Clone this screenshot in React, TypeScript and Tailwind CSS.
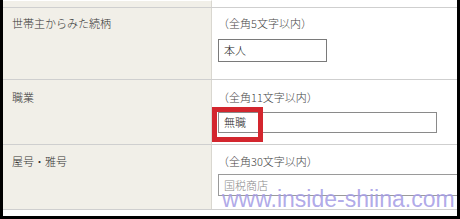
const jp = "font-['Noto_Sans_CJK_JP','Noto_Sans',sans-serif]";

function Row({
  label,
  hint,
  children,
  h,
  pt,
  gap,
}: {
  label: string;
  hint: string;
  children: React.ReactNode;
  h: string;
  pt: string;
  gap: string;
}) {
  return (
    <div className={`grid grid-cols-[209px_1fr] border-b border-[#cfcfcf] ${h}`}>
      <div className={`bg-[#f1efe8] border-r border-[#d9d7d0] pl-[9px] ${pt}`}>
        <div className="text-[11px] leading-[15px] font-light text-[#333]">{label}</div>
      </div>
      <div className={`bg-white pl-[6px] ${pt}`}>
        <div className="text-[11px] leading-[15px] font-light text-[#444]">{hint}</div>
        <div className={gap}>{children}</div>
      </div>
    </div>
  );
}

export default function App() {
  return (
    <div
      className={`${jp} relative w-[460px] h-[219px] overflow-hidden bg-white border-l-[3px] border-r-[3px] border-b-[3px] border-black`}
    >
      <div className="grid grid-cols-[209px_1fr] h-[8px] border-b border-[#cfcfcf]">
        <div className="bg-[#f1efe8] border-r border-[#d9d7d0] border-t border-t-white" />
        <div className="bg-white" />
      </div>

      <Row label="世帯主からみた続柄" hint="（全角5文字以内）" h="h-[72px]" pt="pt-[8px]" gap="mt-[8px]">
        <div className="w-[109px] h-[23px] border border-[#7a7a7a] flex items-center pl-[5px] text-[11px] font-light text-[#222]">
          本人
        </div>
      </Row>

      <Row label="職業" hint="（全角11文字以内）" h="h-[65px]" pt="pt-[10px]" gap="mt-[7px]">
        <div className="w-[219px] h-[21px] border border-[#8a8a8a] flex items-center pl-[5px] text-[11px] font-light text-[#222]">
          無職
        </div>
      </Row>

      <Row label="屋号・雅号" hint="（全角30文字以内）" h="h-[65px]" pt="pt-[9px]" gap="mt-[5px]">
        <div className="w-[260px] h-[22px] border border-[#9a9a9a] flex items-center pl-[5px] text-[11px] font-light text-[#888]">
          国税商店
        </div>
      </Row>

      <div className="absolute left-[209px] top-[107px] w-[51px] h-[35px] border-[5px] border-[#d3262e]" />

      <div className="absolute left-[219px] top-[185px] font-['Liberation_Sans',Arial,sans-serif] text-[23px] leading-[28px] text-[#a79fe6]/90 whitespace-nowrap">
        www.inside-shiina.com
      </div>
    </div>
  );
}
